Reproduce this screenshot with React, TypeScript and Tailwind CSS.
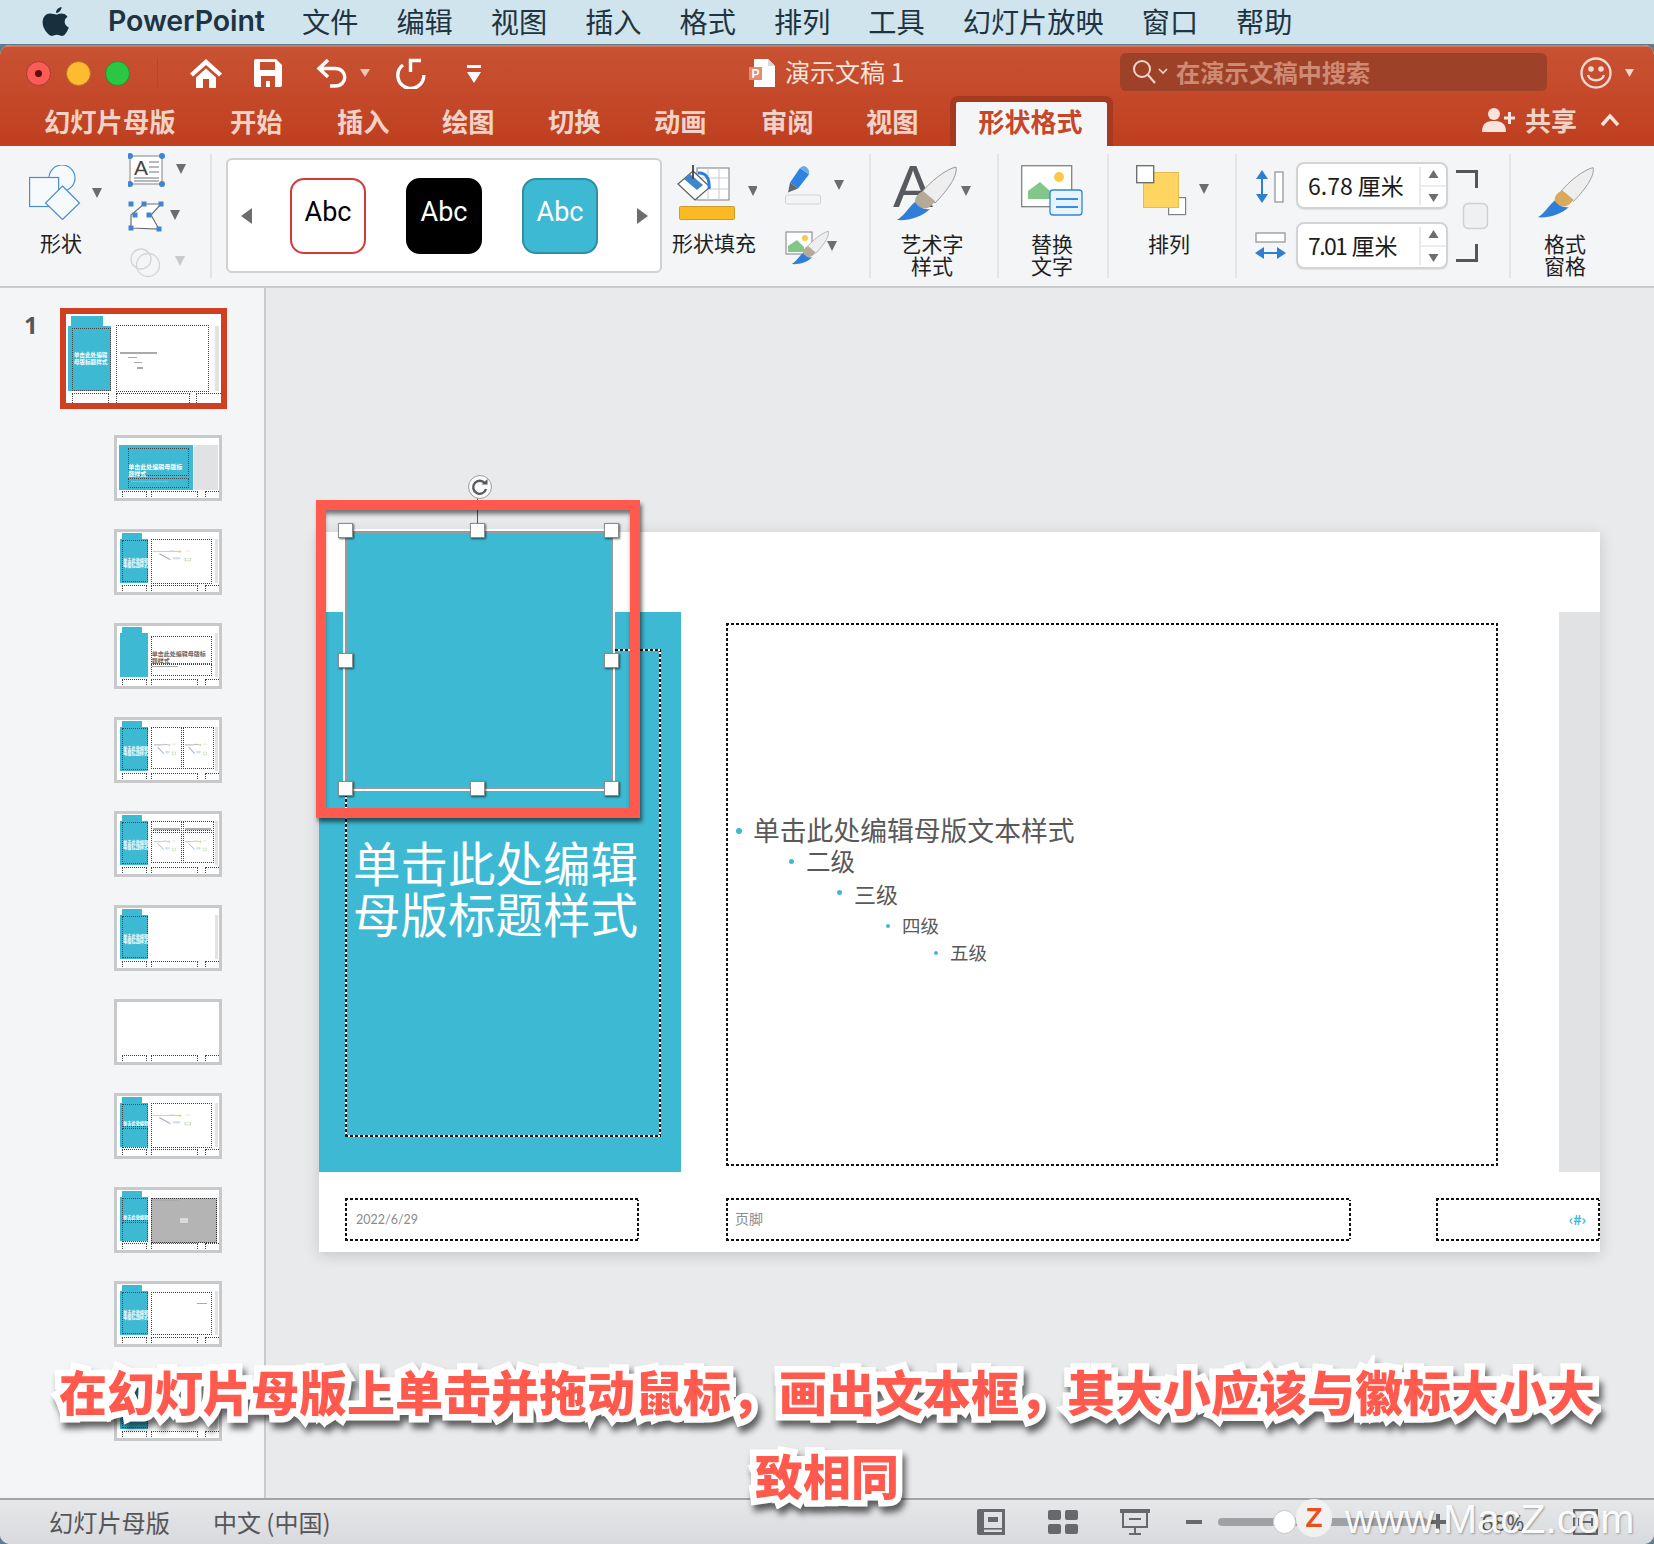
import React from "react";

const CJK = "font-['Noto_Sans_CJK_SC','Noto_Sans',sans-serif]";
const DOTS = "[background:repeating-linear-gradient(90deg,#111_0_3px,#fff_3px_5px)_top/100%_2px_no-repeat,repeating-linear-gradient(90deg,#111_0_3px,#fff_3px_5px)_bottom/100%_2px_no-repeat,repeating-linear-gradient(0deg,#111_0_3px,#fff_3px_5px)_left/2px_100%_no-repeat,repeating-linear-gradient(0deg,#111_0_3px,#fff_3px_5px)_right/2px_100%_no-repeat]";

type Piece = { k: "t" | "g" | "d" | "x" | "c" | "p" | "n"; l: number; t: number; w: number; h: number; s?: string; z?: number; color?: string };
const p = (k: Piece["k"], l: number, t: number, w: number, h: number, s?: string, z?: number, color?: string): Piece => ({ k, l, t, w, h, s, z, color });

const foot = [p("d", 5, 88, 24, 24), p("d", 33, 88, 46, 24), p("d", 86, 88, 20, 24)];
const left = [p("t", 5, 2, 20, 9), p("t", 3, 11, 27, 74)];
const band = [p("g", 96, 11, 3, 74)];
const ltitle = [p("d", 5, 14, 25, 69), p("x", 6, 43, 24, 12, "单击此处编辑\n母版标题样式", 4.2, "#fff")];
const split = [p("d", 5, 14, 25, 38), p("d", 5, 54, 25, 32), p("x", 6, 42, 24, 8, "单击此处编辑", 4.2, "#fff")];

const thumbs: Piece[][] = [
  [p("t", 2, 11, 73, 75), p("g", 75.5, 11, 23.5, 75), p("d", 11, 16, 60, 47), p("d", 11, 66, 60, 17), p("x", 11, 43, 60, 20, "单击此处编辑母版标\n题样式", 6, "#fff"), p("n", 14, 71, 36, 2), ...foot],
  [...left, ...band, ...ltitle, p("d", 33, 11, 60, 76), p("c", 35, 28, 42, 22), ...foot],
  [...left, ...band, p("d", 33, 17, 60, 46), p("x", 34, 42, 58, 20, "单击此处编辑母版标\n题样式", 6, "#666"), p("d", 33, 63, 60, 20), p("n", 34, 66, 26, 2), ...foot],
  [...left, ...band, ...ltitle, p("d", 33, 12, 31, 70), p("d", 65, 12, 30, 70), p("c", 36, 36, 24, 24), p("c", 67, 36, 24, 24), ...foot],
  [...left, ...band, ...ltitle, p("d", 33, 12, 31, 17), p("d", 65, 12, 30, 17), p("d", 33, 30, 31, 52), p("d", 65, 30, 30, 52), p("n", 35, 24, 27, 3), p("n", 67, 24, 25, 3), p("c", 36, 42, 24, 22), p("c", 67, 42, 24, 22), ...foot],
  [...left, ...band, ...ltitle, ...foot],
  [...foot],
  [...left, ...band, ...split, p("d", 33, 11, 60, 76), p("c", 35, 28, 42, 22), ...foot],
  [...left, ...split, p("p", 33, 13, 65, 76), p("n", 35, 16, 26, 2), ...foot],
  [...left, ...band, ...ltitle, p("d", 33, 13, 60, 72), p("n", 78, 32, 10, 2), ...foot],
  [...left, ...band, ...ltitle, ...foot],
];
const selected: Piece[] = [
  p("t", 3, 2, 21, 12), p("t", 1.3, 13, 27.7, 74), p("g", 96, 13, 3, 74),
  p("d", 4, 16, 25, 71), p("x", 5, 43, 25, 14, "单击此处编辑\n母版标题样式", 5.6, "#fff"),
  p("d", 32, 12, 60, 76), p("n", 35, 43, 24, 1.4), p("n", 40, 48, 6, 1.4), p("n", 44, 54, 5, 1.4), p("n", 46, 60, 4, 1.4),
  p("d", 4, 89, 24, 24), p("d", 32, 89, 48, 24), p("d", 84, 89, 20, 24),
];

function Mini({ pieces }: { pieces: Piece[] }) {
  return (
    <div className="relative w-full h-full bg-white overflow-hidden">
      {pieces.map((x, i) => {
        const style: React.CSSProperties = { left: `${x.l}%`, top: `${x.t}%`, width: `${x.w}%`, height: `${x.h}%` };
        if (x.k === "t") return <div key={i} className="absolute bg-[#3db9d3]" style={style} />;
        if (x.k === "g") return <div key={i} className="absolute bg-[#e1e2e3]" style={style} />;
        if (x.k === "p") return <div key={i} className="absolute bg-[#b4b4b4] border border-dotted border-[#333] flex items-center justify-center" style={style}><div className="w-[8px] h-[5px] bg-[#d9d9d9]" /></div>;
        if (x.k === "d") return <div key={i} className="absolute border border-dotted border-[#444]" style={style} />;
        if (x.k === "n") return <div key={i} className="absolute bg-[#aaa]" style={style} />;
        if (x.k === "c")
          return (
            <svg key={i} className="absolute" style={style} viewBox="0 0 40 20" preserveAspectRatio="none">
              <path d="M0 4 H12 L18 3 L24 4" stroke="#b9c2c8" strokeWidth="1.4" fill="none" />
              <circle cx="25" cy="4" r="1.6" fill="#f2cf6b" />
              <path d="M30 3h5M30 14h5v4h-5z" stroke="#c8d8b8" strokeWidth="1" fill="none" />
              <path d="M6 7 L16 16" stroke="#aab" strokeWidth="1.4" />
              <ellipse cx="22" cy="14" rx="4" ry="2" fill="#cfe3f2" />
            </svg>
          );
        return (
          <div key={i} className={`absolute whitespace-pre font-bold ${CJK}`} style={{ ...style, fontSize: x.z, lineHeight: `${(x.z ?? 4) + 0.8}px`, color: x.color }}>
            {x.s}
          </div>
        );
      })}
    </div>
  );
}

function Caret({ x, y, c = "#6b6d70" }: { x: number; y: number; c?: string }) {
  return <path d={`M${x} ${y}h10l-5 10z`} fill={c} />;
}

function Brush({ tf, ferrule = "#b5a998" }: { tf: string; ferrule?: string }) {
  return (
    <g transform={tf}>
      <path d="M62 2C64 12 51 28 41 38L28 27C36 17 52 4 62 2Z" fill="#eeeeef" stroke="#97989a" strokeWidth="1" />
      <path d="M41 36C36 44 30 46 22 40C19 34 23 29 29 26Z" fill={ferrule} />
      <path d="M36 44C28 52 14 56 3 55C10 51 14 43 21 37C24 42 30 45 36 44Z" fill="#2f7fd8" />
    </g>
  );
}

function ShapesIcon() {
  return (
    <svg width="73" height="55" viewBox="0 0 73 55">
      <circle cx="33" cy="13" r="13" fill="#f6fafd" stroke="#4a8fcb" strokeWidth="1.2" />
      <rect x="0.6" y="12.5" width="29" height="29" fill="#f6fafd" stroke="#4a8fcb" strokeWidth="1.2" />
      <path d="M33.5 21L50.5 38L33.5 54.5L16.5 38Z" fill="#f6fafd" stroke="#4a8fcb" strokeWidth="1.2" />
      <Caret x={63} y={23} />
    </svg>
  );
}

function SmallCol1() {
  const sq = [[3, 51], [3, 75], [16, 51], [33, 51], [31, 76], [21, 62], [7, 62]];
  return (
    <svg width="60" height="125" viewBox="0 0 60 125">
      <rect x="2" y="3" width="32" height="28" fill="#fff" stroke="#a8aaad" strokeWidth="1.5" />
      {[[2, 3], [34, 3], [2, 31], [34, 31]].map(([a, b], i) => <circle key={i} cx={a} cy={b} r="3" fill="#3f86cf" />)}
      <text x="6" y="22" fontSize="21" fill="#444" fontFamily="Liberation Sans">A</text>
      <path d="M21 9h10M21 14h10M21 19h10M6 25h25M6 28h25" stroke="#9fa1a4" strokeWidth="1.3" />
      <path d="M3 75L3 62L16 51H33L23 62L31 76Z" fill="#fff" stroke="#6c6e71" strokeWidth="1.2" />
      {sq.map(([a, b], i) => <rect key={i} x={a - 2.5} y={b - 2.5} width="5" height="5" fill="#3f86cf" />)}
      <Caret x={42} y={57} />
      <circle cx="13" cy="106" r="10" fill="none" stroke="#d3d4d6" strokeWidth="1.3" />
      <circle cx="20" cy="112" r="11.5" fill="none" stroke="#d3d4d6" strokeWidth="1.3" />
      <Caret x={47} y={103} c="#c8c9cb" />
      <Caret x={48} y={11} />
    </svg>
  );
}

function FillIcon() {
  return (
    <svg width="81" height="57" viewBox="0 0 81 57">
      <rect x="21" y="5" width="32" height="32" fill="#fff" stroke="#8f9194" strokeWidth="1.2" />
      <path d="M21 15h32M21 26h32M32 5v32M43 5v32" stroke="#c8cacc" strokeWidth="1" />
      <path d="M17 8L34 24L19 37L2 21Z" fill="#fff" stroke="#5b5d60" strokeWidth="1.2" />
      <path d="M14 11L27 22L21 27L8 16Z" fill="#3f86cf" />
      <path d="M17 16V2" stroke="#444" strokeWidth="1.8" fill="none" />
      <path d="M22 10C30 9 34 16 33 26" stroke="#2f7fd8" strokeWidth="3" fill="none" />
      <rect x="3.5" y="43.5" width="55" height="13" rx="1" fill="#fbb923" stroke="#cc9a2e" />
      <Caret x={72} y={23} />
    </svg>
  );
}

function SmallCol2() {
  return (
    <svg width="60" height="100" viewBox="0 0 60 100">
      <path d="M15 3l9 6.5-11 14-8-6z" fill="#2f83e0" />
      <path d="M15 3l3-2c3 0 7 3 6 8.500z" fill="#6aa8ea" />
      <path d="M5 17.500l8 6-10 4z" fill="#66686b" />
      <rect x="0.5" y="30" width="35" height="9" rx="2" fill="#f3f4f5" stroke="#d2d3d5" />
      <Caret x={49} y={15} />
      <rect x="1" y="67" width="26" height="22" fill="#fff" stroke="#7d7f82" />
      <path d="M3 87V81L12 75L19 82V87Z" fill="#82c68a" />
      <circle cx="20" cy="73" r="3" fill="#fbc94a" />
      <Brush tf="translate(5 65) scale(0.62)" />
      <Caret x={42} y={76} />
    </svg>
  );
}

function ArtIcon() {
  return (
    <svg className="mt-[-14px]" width="80" height="70" viewBox="0 -14 80 70">
      <text x="1" y="42" fontSize="60" fontFamily="Liberation Sans" fill="#585a5f">A</text>
      <Brush tf="translate(2 0)" />
      <Caret x={69} y={21} />
    </svg>
  );
}

function AltIcon() {
  return (
    <svg width="62" height="51" viewBox="0 0 62 51">
      <rect x="0.7" y="0.7" width="50" height="41" fill="#fff" stroke="#808285" strokeWidth="1.3" />
      <circle cx="38" cy="12" r="5" fill="#fbc94a" />
      <path d="M7 34V26L19 17L29 26V34Z" fill="#82c68a" />
      <rect x="29" y="25" width="32" height="25" rx="3" fill="#e7f4fd" stroke="#2e86d6" strokeWidth="1.3" />
      <path d="M35 34H57M35 42H57" stroke="#3a8ee0" strokeWidth="2.2" />
    </svg>
  );
}

function ArrangeIcon() {
  return (
    <svg width="73" height="51" viewBox="0 0 73 51">
      <rect x="32.6" y="32.6" width="17" height="17" fill="#fff" stroke="#808285" strokeWidth="1.2" />
      <rect x="7.5" y="7.5" width="35" height="35" fill="#ffd562" stroke="#e8bb4e" />
      <rect x="0.7" y="0.7" width="17" height="17" fill="#fff" stroke="#66686b" strokeWidth="1.3" />
      <Caret x={63} y={19} />
    </svg>
  );
}

function RCol({ w, ml = "", icon, label, pr = 0, mt = "mt-[12px]" }: { w: string; ml?: string; icon: React.ReactNode; label: React.ReactNode; pr?: number; mt?: string }) {
  return (
    <div className={`flex flex-col items-center shrink-0 ${w} ${ml}`}>
      <div className="mt-[19px] h-[55px]">{icon}</div>
      <div className={`text-[21px] leading-[22px] text-center text-[#1f1f1f] ${mt} ${CJK}`} style={pr ? { paddingRight: pr } : undefined}>{label}</div>
    </div>
  );
}

function Div({ ml }: { ml: string }) {
  return <div className={`w-[2px] h-[124px] mt-[8px] bg-[#e4e5e7] shrink-0 ${ml}`} />;
}

function Abc({ cls }: { cls: string }) {
  return <div className={`w-[76px] h-[76px] rounded-[14px] border-2 flex items-center justify-center text-[27px] font-['Roboto',sans-serif] shrink-0 pb-[6px] ${cls}`}>Abc</div>;
}

function SizeInput({ v, u, cls = "" }: { v: string; u: string; cls?: string }) {
  return (
    <div className="h-[47px] w-[152px] bg-white border-2 border-[#d2d3d5] rounded-[8px] flex items-center pl-[10px] shadow-[0_1px_1px_rgba(0,0,0,0.08)]">
      <span className={`text-[23px] text-[#1c1c1c] ${CJK} whitespace-nowrap`}><span className={cls}>{v}</span> {u}</span>
      <div className="ml-auto w-[27px] h-[38px] border-l-2 border-[#e8e9ea] flex flex-col items-center justify-center gap-[6px]">
        <svg width="11" height="10"><path d="M5.5 1L10.5 9H.5Z" fill="#6b6d70" /></svg>
        <div className="w-full h-[2px] bg-[#eceded]" />
        <svg width="11" height="10"><path d="M.5 1H10.5L5.5 9Z" fill="#6b6d70" /></svg>
      </div>
    </div>
  );
}

function Handle({ cls }: { cls: string }) {
  return <div className={`absolute w-[15px] h-[15px] bg-white border border-[#8b8b8b] shadow-[1px_1px_2px_rgba(0,0,0,0.6)] ${cls}`} />;
}

function ListRow({ h, ml, size, text, dot, gap = "ml-[12px]" }: { h: string; ml: string; size: string; text: string; dot: string; gap?: string }) {
  return (
    <div className={`flex items-center ${h} ${ml}`}>
      <div className={`rounded-full bg-[#3db9d3] shrink-0 ${dot}`} />
      <div className={`text-[#595959] whitespace-nowrap ${gap} ${size} ${CJK}`}>{text}</div>
    </div>
  );
}

const MENU = ["文件", "编辑", "视图", "插入", "格式", "排列", "工具", "幻灯片放映", "窗口", "帮助"];
const TABS: [string, string][] = [
  ["幻灯片母版", "ml-[44px] w-[132px]"], ["开始", "ml-[54px] w-[52px]"], ["插入", "ml-[55px] w-[52px]"], ["绘图", "ml-[53px] w-[52px]"],
  ["切换", "ml-[54px] w-[52px]"], ["动画", "ml-[54px] w-[52px]"], ["审阅", "ml-[55px] w-[52px]"], ["视图", "ml-[53px] w-[52px]"],
];

export default function App() {
  return (
    <div className={`relative w-[1654px] h-[1544px] overflow-hidden bg-[#5d7d8f] ${CJK}`}>
      {/* macOS menu bar */}
      <div className="h-[44px] bg-[#d0e4ed] flex items-center text-[#1e3442] pb-[2px]">
        <svg className="ml-[42px] shrink-0" width="27" height="31" viewBox="0 0 27 31">
          <path fill="#17303d" d="M19.5 1C19.7 3.6 17.3 7 14 7C13.7 4.3 16.4 1.2 19.5 1ZM14.3 8.6C15.6 8.6 17.3 7.4 19.6 7.5C21 7.6 23.7 8 25.5 10.7C21.2 13.4 22 19.5 26.8 21.4C25.6 24.8 22.9 30 20 30C18.2 30 17.2 28.8 14.9 28.8C12.6 28.8 11.5 30 9.8 30C6.6 30 .6 23 .6 16.6C.6 10.7 4.4 7.6 8 7.6C10.6 7.6 12.8 8.6 14.3 8.6Z" />
        </svg>
        <span className="ml-[39px] w-[156px] text-[28.5px] font-semibold font-['Inter',sans-serif] tracking-[-0.1px] whitespace-nowrap">PowerPoint</span>
        <div className="flex gap-[38px] ml-[38px]">
          {MENU.map((m) => (
            <span key={m} className="text-[28.2px] leading-none whitespace-nowrap">{m}</span>
          ))}
        </div>
      </div>
      {/* window */}
      <div className="mt-[1px] h-[1499px] rounded-[10px] overflow-hidden flex flex-col bg-[#e9eaec]">
        <div className="h-[101px] bg-gradient-to-b from-[#c85233] to-[#bf3f1f] border-t-2 border-[#d8775c] shrink-0">
          {/* title row */}
          <div className="h-[49px] flex items-center pt-[3px] text-white">
            <div className="ml-[26px] w-[25px] h-[25px] rounded-full bg-[#fc5c57] border border-[#a93a30] flex items-center justify-center"><div className="w-[7px] h-[7px] rounded-full bg-[#5c0f0c]" /></div>
            <div className="ml-[15px] w-[25px] h-[25px] rounded-full bg-[#fdbc2f] border border-[#b8702a]" />
            <div className="ml-[14px] w-[25px] h-[25px] rounded-full bg-[#29c840] border border-[#2d8a3a]" />
            <div className="ml-[27px] w-[1px] h-[30px] bg-[#b5472b]" />
            <svg className="ml-[32px]" width="32" height="29" viewBox="0 0 32 29"><path fill="#fff" d="M16 0L0 14.5l3 3L16 6l13 11.5 3-3zM6 18.5L16 9.5l10 9V29h-7v-9h-6v9H6z" /></svg>
            <svg className="ml-[32px]" width="28" height="28" viewBox="0 0 28 28"><path fill="#fff" fillRule="evenodd" d="M2 0h20l6 6v20a2 2 0 0 1-2 2H2a2 2 0 0 1-2-2V2a2 2 0 0 1 2-2zM6 3v8h15V3zM7 17v11h14V17zM12 22h4v6h-4z" /></svg>
            <svg className="ml-[34px]" width="31" height="30" viewBox="0 0 31 30" fill="none" stroke="#fff" strokeWidth="3.4"><path d="M12 2L3 10.5L12 19M3 10.5H19C32 10.5 32 28 19 28H14" /></svg>
            <svg className="ml-[13px]" width="10" height="10" viewBox="0 0 10 10"><path d="M0 1h10L5 9z" fill="#eec7ba" /></svg>
            <svg className="ml-[26px]" width="30" height="31" viewBox="0 0 30 31" fill="none" stroke="#fff" strokeWidth="3.4"><path d="M7 7A13 13 0 1 0 27.800 17" /><path d="M14.500 14V2.500H25" /></svg>
            <svg className="ml-[40px]" width="16" height="22" viewBox="0 0 16 22"><path fill="#fff" d="M1 3h14v3H1zM1 10h14l-7 11z" /></svg>
            <svg className="ml-[267px]" width="26" height="28" viewBox="0 0 26 28"><path d="M5 0h14l7 7v21H5z" fill="#fff" /><path d="M19 0l7 7h-7z" fill="#d9d9d9" /><rect x="0" y="8" width="13" height="13" fill="#e58a70" /><text x="2.5" y="18.5" fontSize="12" fontWeight="700" fill="#fff" fontFamily="Liberation Sans">P</text></svg>
            <span className="ml-[10px] mb-[4px] w-[121px] text-[25px] text-[#f8e4dc] whitespace-nowrap leading-none">演示文稿 1</span>
            <div className="ml-[214px] w-[427px] h-[38px] mt-[-2px] rounded-[6px] bg-[#9e4129] flex items-center">
              <svg className="ml-[12px]" width="36" height="26" viewBox="0 0 36 26" fill="none" stroke="#f3d6cb" strokeWidth="2"><circle cx="10" cy="10" r="8" /><path d="M16 16L23 24" /><path d="M27 10l4 4 4-4" strokeWidth="1.6" /></svg>
              <span className="ml-[8px] text-[24.3px] font-bold text-[#cf8a74] leading-none whitespace-nowrap">在演示文稿中搜索</span>
            </div>
            <svg className="ml-[33px]" width="32" height="32" viewBox="0 0 32 32" fill="none" stroke="#f4d9cf" strokeWidth="2.4"><circle cx="16" cy="16" r="14.5" /><path d="M8 18C10 25 22 25 24 18" /><circle cx="11" cy="12" r="1.6" fill="#f4d9cf" /><circle cx="21" cy="12" r="1.6" fill="#f4d9cf" /></svg>
            <svg className="ml-[13px]" width="9" height="10" viewBox="0 0 9 10"><path d="M0 1h9L4.5 9z" fill="#f4d9cf" /></svg>
          </div>
          {/* tab row */}
          <div className="h-[50px] flex items-stretch text-[#f1d2c7]">
            {TABS.map(([t, c]) => (
              <div key={t + c} className={`flex items-center text-[26.3px] font-bold leading-none whitespace-nowrap ${c}`}>{t}</div>
            ))}
            <div className="ml-[32px] w-[163px] border-x-[6px] border-t-[6px] border-[#a53a1f] rounded-t-[8px] bg-[#f4f5f7] flex items-center justify-center text-[26px] font-bold text-[#c8452a] leading-none pb-[7px] pr-[2px]">形状格式</div>
            <div className="ml-[369px] flex items-center pb-[3px]">
              <svg width="34" height="24" viewBox="0 0 34 24"><circle cx="12" cy="6" r="6" fill="#f8e4dc" /><path d="M0 24C0 15 5 13 12 13S24 15 24 24Z" fill="#f8e4dc" /><path d="M22 10h11M27.5 4v12" stroke="#f8e4dc" strokeWidth="3" /></svg>
              <span className="ml-[9px] text-[26px] font-bold leading-none">共享</span>
              <svg className="ml-[23px]" width="20" height="14" viewBox="0 0 20 14" fill="none" stroke="#f8e4dc" strokeWidth="3.4"><path d="M2 12L10 3l8 9" /></svg>
            </div>
          </div>
        </div>
        {/* ribbon */}
        <div className="h-[142px] bg-[#f4f5f7] border-b-2 border-[#c9cacc] flex shrink-0">
          <div className="w-[122px] shrink-0">
            <div className="mt-[19px] ml-[29px] h-[55px]"><ShapesIcon /></div>
            <div className="mt-[11px] ml-[40px] text-[21px] leading-[22px] text-[#1f1f1f]">形状</div>
          </div>
          <div className="ml-[6px] mt-[7px] w-[60px] shrink-0"><SmallCol1 /></div>
          <Div ml="ml-[22px]" />
          <div className="ml-[14px] mt-[12px] w-[436px] h-[115px] bg-white border-2 border-[#d0d1d3] rounded-[6px] flex items-center shrink-0 pl-[12px]">
            <svg className="shrink-0" width="12" height="16" viewBox="0 0 12 16"><path d="M12 0V16L1 8Z" fill="#6b6d70" /></svg>
            <div className="ml-[38px]" />
            <Abc cls="bg-white border-[#d23b3b] text-black" />
            <div className="ml-[40px]" />
            <Abc cls="bg-black border-black text-white" />
            <div className="ml-[40px]" />
            <Abc cls="bg-[#3db9d3] border-[#2f8fa2] text-white" />
            <div className="ml-[39px]" />
            <svg className="shrink-0" width="12" height="16" viewBox="0 0 12 16"><path d="M0 0V16L11 8Z" fill="#6b6d70" /></svg>
          </div>
          <div className="ml-[10px] w-[87px] shrink-0">
            <div className="mt-[17px] ml-[4px] h-[57px]"><FillIcon /></div>
            <div className="mt-[11px] text-[21px] leading-[22px] text-[#1f1f1f] whitespace-nowrap">形状填充</div>
          </div>
          <div className="ml-[26px] mt-[19px] w-[60px] shrink-0"><SmallCol2 /></div>
          <Div ml="ml-[24px]" />
          <RCol w="w-[122px]" icon={<ArtIcon />} label={<>艺术字<br />样式</>} />
          <Div ml="ml-[4px]" />
          <RCol w="w-[106px]" icon={<AltIcon />} label={<>替换<br />文字</>} />
          <Div ml="ml-[2px]" />
          <RCol w="w-[126px]" mt="mt-[12px]" icon={<ArrangeIcon />} label="排列" pr={6} />
          <Div ml="" />
          <div className="w-[272px] flex shrink-0 pt-[16px]">
            <svg className="ml-[18px] shrink-0" width="32" height="107" viewBox="0 0 32 107">
              <path d="M7 10V38" stroke="#2f7fd0" strokeWidth="2" />
              <path d="M7 8L13 17H1ZM7 41L13 32H1Z" fill="#2f7fd0" />
              <rect x="20" y="10" width="8" height="30" fill="#fff" stroke="#8d8f92" strokeWidth="1.2" />
              <rect x="1" y="71" width="29" height="9" fill="#fff" stroke="#8d8f92" strokeWidth="1.2" />
              <path d="M4 91H27" stroke="#2f7fd0" strokeWidth="2" />
              <path d="M0 91L9 85V97ZM31 91L22 85V97Z" fill="#2f7fd0" />
            </svg>
            <div className="ml-[9px] flex flex-col gap-[13px] shrink-0">
              <SizeInput v="6.78" u="厘米" />
              <SizeInput v="7.01" u="厘米" cls="tracking-[-1.6px]" />
            </div>
            <svg className="ml-[8px] shrink-0" width="33" height="107" viewBox="0 0 33 107">
              <path d="M0 9.5H20.5V26M20.5 82V98.5H0" fill="none" stroke="#555659" strokeWidth="3" />
              <rect x="7.5" y="41.5" width="24" height="25" rx="5" fill="#eff0f1" stroke="#cfd0d2" strokeWidth="1.5" />
            </svg>
          </div>
          <Div ml="" />
          <RCol w="w-[108px]" icon={<svg width="60" height="55" viewBox="0 0 64 57"><Brush tf="" ferrule="#dba95c" /></svg>} label={<>格式<br />窗格</>} />
        </div>
        {/* main */}
        <div className="flex-1 flex min-h-0">
          <div className="w-[266px] shrink-0 bg-[#f4f5f7] border-r-2 border-[#c9cacc] pt-[20px] overflow-hidden">
            <div className="flex">
              <div className="ml-[24px] w-[36px] text-[24px] font-bold text-[#555659] leading-[34px] font-['Open_Sans',sans-serif]">1</div>
              <div className="w-[167px] h-[101px] border-[6px] border-[#d23f20] bg-white"><Mini pieces={selected} /></div>
            </div>
            <div className="mt-[26px] ml-[114px] flex flex-col gap-[28px]">
              {thumbs.map((t, i) => (
                <div key={i} className="w-[108px] h-[66px] border-[3px] border-[#c8c9cb] shrink-0"><Mini pieces={t} /></div>
              ))}
            </div>
          </div>
          {/* free slide canvas */}
          <div className="relative flex-1 bg-[#e9eaec]">
            <div className="absolute left-[53px] top-[244px] w-[1281px] h-[720px] bg-white shadow-[0_3px_14px_rgba(0,0,0,0.16)]">
              <div className="absolute left-0 top-[80px] w-[362px] h-[560px] bg-[#3db9d3]" />
              <div className="absolute left-[1240px] top-[80px] w-[41px] h-[560px] bg-[#e1e2e3]" />
              <div className={`absolute left-[26px] top-[117px] w-[316px] h-[488px] ${DOTS}`} />
              <div className={`absolute left-[34px] top-[304px] text-white text-[47.5px] leading-[51px] whitespace-nowrap ${CJK}`}>单击此处编辑<br />母版标题样式</div>
              <div className={`absolute left-[407px] top-[91px] w-[772px] h-[543px] pt-[192px] ${DOTS}`}>
                <ListRow h="h-[31px]" ml="ml-[10px]" gap="ml-[11px]" dot="w-[6px] h-[6px]" size="text-[26.8px] leading-none" text="单击此处编辑母版文本样式" />
                <ListRow h="h-[31px]" ml="ml-[63px]" dot="w-[5px] h-[5px]" size="text-[24.5px] leading-none" text="二级" />
                <ListRow h="h-[31px]" ml="ml-[111px]" dot="w-[5px] h-[5px]" size="text-[22px] leading-none" text="三级" />
                <ListRow h="h-[35px]" ml="ml-[160px]" dot="w-[4px] h-[4px]" size="text-[18.5px] leading-none" text="四级" />
                <ListRow h="h-[19px]" ml="ml-[208px]" dot="w-[4px] h-[4px]" size="text-[18.5px] leading-none" text="五级" />
              </div>
              <div className={`absolute left-[26px] top-[666px] w-[294px] h-[43px] flex items-center pl-[11px] pt-[1px] text-[12.5px] text-[#8b8b8b] font-['Lato',sans-serif] ${DOTS}`}>2022/6/29</div>
              <div className={`absolute left-[407px] top-[666px] w-[625px] h-[43px] flex items-center pl-[9px] text-[14px] pb-[2px] text-[#8b8b8b] ${DOTS}`}>页脚</div>
              <div className={`absolute left-[1117px] top-[666px] w-[164px] h-[43px] flex items-center justify-end pr-[14px] text-[14px] font-bold text-[#3db9d3] ${DOTS}`}>‹#›</div>

              {/* selected shape */}
              <div className="absolute left-[24px] top-[-3px] w-[272px] h-[262px] border-2 border-white">
                <div className="w-full h-full bg-[#3db9d3] border-2 border-[#9a9a9a]" />
              </div>
              <div className="absolute left-[158px] top-[-34px] w-[1px] h-[30px] bg-[#555]" />
              <Handle cls="left-[19px] top-[-9px]" />
              <Handle cls="left-[151px] top-[-9px]" />
              <Handle cls="left-[285px] top-[-9px]" />
              <Handle cls="left-[19px] top-[121px]" />
              <Handle cls="left-[285px] top-[121px]" />
              <Handle cls="left-[19px] top-[249px]" />
              <Handle cls="left-[151px] top-[249px]" />
              <Handle cls="left-[285px] top-[249px]" />
              <svg className="absolute left-[148px] top-[-58px]" width="26" height="26" viewBox="0 0 26 26">
                <circle cx="13" cy="13" r="11.5" fill="#fafafa" stroke="#9d9d9d" />
                <path d="M18 9.5A6.5 6.5 0 1 0 19 15" fill="none" stroke="#58595b" strokeWidth="2.4" />
                <path d="M14.5 10.5H20.5V5Z" fill="#58595b" />
              </svg>
            </div>
            {/* highlight frame */}
            <div className="absolute left-[50px] top-[212px] w-[324px] h-[318px] border-[10px] border-[#ff5a4d] shadow-[2px_4px_4px_rgba(0,0,0,0.55),inset_0_5px_4px_-1px_rgba(0,0,0,0.5)]" />
          </div>
        </div>
        {/* status */}
        <div className="h-[46px] shrink-0 border-t-2 border-[#a3a4a6] bg-gradient-to-b from-[#e6e7e9] to-[#d9dadd] flex items-center text-[#555659]">
          <span className="ml-[49px] text-[24.2px] leading-none whitespace-nowrap">幻灯片母版</span>
          <span className="ml-[43px] text-[24px] leading-none whitespace-nowrap">中文 (中国)</span>
          <div className="ml-auto pr-[56px] flex items-center">
            <svg width="28" height="26" viewBox="0 0 28 26"><path fill="#66686b" fillRule="evenodd" d="M2 0H28V26H2a2 2 0 0 1-2-2V2a2 2 0 0 1 2-2zM7 3V23H25V3zM11 8h10v5H11z" /><rect x="7" y="19" width="18" height="1.6" fill="#66686b" /></svg>
            <svg className="ml-[43px]" width="30" height="24" viewBox="0 0 30 24" fill="#66686b"><rect width="13" height="10" rx="2" /><rect x="17" width="13" height="10" rx="2" /><rect y="14" width="13" height="10" rx="2" /><rect x="17" y="14" width="13" height="10" rx="2" /></svg>
            <svg className="ml-[42px]" width="30" height="26" viewBox="0 0 30 26" fill="none" stroke="#66686b" strokeWidth="2"><path d="M0 2h30" strokeWidth="4" /><path d="M3 3V18H27V3M15 18V25M9 25H21M9 10H21" /></svg>
            <div className="ml-[36px] w-[16px] h-[4px] bg-[#66686b]" />
            <div className="relative ml-[16px] w-[210px] h-[8px] rounded-full bg-[#a0a1a4]">
              <div className="absolute left-[55px] top-[-8px] w-[23px] h-[24px] rounded-full bg-white border border-[#c9c9c9]" />
            </div>
            <svg className="ml-[2px]" width="16" height="16" viewBox="0 0 16 16" fill="#66686b"><path d="M6 0h4v6h6v4h-6v6H6v-6H0V6h6z" /></svg>
            <span className="ml-[35px] w-[49px] text-[22px] leading-none font-['Open_Sans',sans-serif]">68%</span>
            <svg className="ml-[43px]" width="25" height="26" viewBox="0 0 25 26" fill="none" stroke="#66686b" strokeWidth="2.4"><rect x="1" y="1" width="23" height="24" /><path d="M6 13H19M6 9v8M19 9v8" strokeWidth="2" /></svg>
          </div>
        </div>
      </div>

      {/* caption */}
      <div className={`absolute left-0 top-[1348px] w-[1654px] text-center text-[48px] leading-[84px] font-black text-[#ff5a4d] whitespace-nowrap [-webkit-text-stroke:13px_white] [paint-order:stroke_fill] [filter:drop-shadow(3px_6px_3px_rgba(0,0,0,0.6))] ${CJK}`}>
        在幻灯片母版上单击并拖动鼠标，画出文本框，其大小应该与徽标大小大<br />致相同
      </div>

      {/* watermark */}
      <div className="absolute left-[1296px] top-[1499px] w-[36px] h-[38px] rounded-full bg-[#f1f1f2] flex items-center justify-center text-[28px] font-bold leading-none text-[#ea4f1c] font-['Liberation_Sans',sans-serif]">Z</div>
      <div className="absolute left-[1345px] top-[1493px] text-[41px] leading-[52px] text-white/95 font-['Liberation_Sans',sans-serif] whitespace-nowrap [text-shadow:1px_1px_2px_rgba(0,0,0,0.3)]">www.MacZ.com</div>
    </div>
  );
}
